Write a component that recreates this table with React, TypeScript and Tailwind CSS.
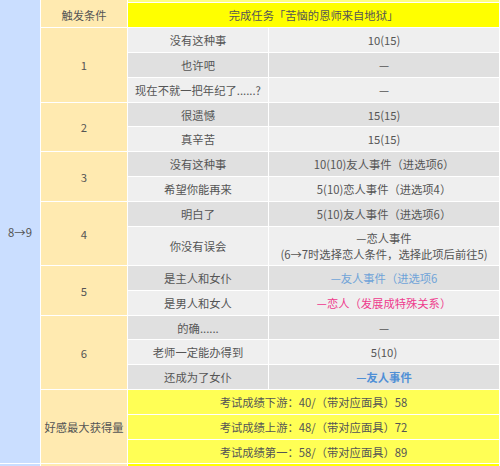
import React from "react";

// Colours taken from the screenshot
const cell = "flex items-center justify-center text-center whitespace-nowrap px-1 leading-[16px]";

const rows: { left: string; right: React.ReactNode; dark: boolean; row: string }[] = [
    { left: "没有这种事", right: "10(15)", dark: false, row: "row-start-3" },
    { left: "也许吧", right: "—", dark: true, row: "row-start-4" },
    { left: "现在不就一把年纪了......?", right: "—", dark: false, row: "row-start-5" },
    { left: "很遗憾", right: "15(15)", dark: true, row: "row-start-6" },
    { left: "真辛苦", right: "15(15)", dark: false, row: "row-start-7" },
    { left: "没有这种事", right: "10(10)友人事件（进选项6）", dark: true, row: "row-start-8" },
    { left: "希望你能再来", right: "5(10)恋人事件（进选项4）", dark: false, row: "row-start-9" },
    { left: "明白了", right: "5(10)友人事件（进选项6）", dark: true, row: "row-start-10" },
    {
        left: "你没有误会",
        right: (
            <span>
                —恋人事件
                <br />
                (6→7时选择恋人条件，选择此项后前往5)
            </span>
        ),
        dark: false,
        row: "row-start-11",
    },
    { left: "是主人和女仆", right: <span className="text-[#6fa3d8]">—友人事件（进选项6</span>, dark: true, row: "row-start-12" },
    { left: "是男人和女人", right: <span className="text-[#ee3a8c]">—恋人（发展成特殊关系）</span>, dark: false, row: "row-start-13" },
    { left: "的确......", right: "—", dark: true, row: "row-start-14" },
    { left: "老师一定能办得到", right: "5(10)", dark: false, row: "row-start-15" },
    { left: "还成为了女仆", right: <span className="font-bold text-[#4f8fd6]">—友人事件</span>, dark: true, row: "row-start-16" },
];

function App() {
    return (
        <div
            className="w-[500px] h-[466px] overflow-hidden bg-white text-[11.3px] text-[#555]"
            style={{ fontFamily: '"Noto Sans CJK SC", "Noto Sans", sans-serif' }}
        >
            <div className="grid grid-cols-[40px_86px_140px_230px] grid-rows-[2px_24px_24px_24px_24px_23px_24px_24px_24px_24px_38px_24px_24px_23px_24px_24px_24px_24px_23px_20px] gap-px pr-px bg-white">
                {/* 左列 */}
                <div className={`${cell} col-start-1 row-start-1 row-end-20 bg-[#cadeff]`}>8→9</div>
                <div className="col-start-1 row-start-20 bg-[#cadeff]" />

                {/* 触发条件 */}
                <div className={`${cell} col-start-2 row-start-1 row-end-3 bg-[#ffeab0] pt-[2px]`}>触发条件</div>
                <div className={`${cell} col-start-2 row-start-3 row-end-6 bg-[#ffeab0]`}>1</div>
                <div className={`${cell} col-start-2 row-start-6 row-end-8 bg-[#ffeab0]`}>2</div>
                <div className={`${cell} col-start-2 row-start-8 row-end-10 bg-[#ffeab0]`}>3</div>
                <div className={`${cell} col-start-2 row-start-10 row-end-12 bg-[#ffeab0]`}>4</div>
                <div className={`${cell} col-start-2 row-start-12 row-end-14 bg-[#ffeab0]`}>5</div>
                <div className={`${cell} col-start-2 row-start-14 row-end-17 bg-[#ffeab0]`}>6</div>
                <div className={`${cell} col-start-2 row-start-17 row-end-20 bg-[#ffeab0]`}>好感最大获得量</div>
                <div className="col-start-2 row-start-20 bg-[#ffeab0]" />

                {/* 任务 */}
                <div className="col-start-3 col-span-2 row-start-1 bg-[#ffff80]" />
                <div className={`${cell} col-start-3 col-span-2 row-start-2 bg-[#ffff00]`}>完成任务「苦恼的恩师来自地狱」</div>

                {rows.map((ROW, idx) => (
                    <React.Fragment key={idx}>
                        <div className={`${cell} col-start-3 ${ROW.row} ${ROW.dark ? "bg-[#e0e0e0]" : "bg-[#efefef]"}`}>{ROW.left}</div>
                        <div className={`${cell} col-start-4 ${ROW.row} ${ROW.dark ? "bg-[#e0e0e0]" : "bg-[#efefef]"}`}>{ROW.right}</div>
                    </React.Fragment>
                ))}

                <div className={`${cell} col-start-3 col-span-2 row-start-17 bg-[#ffff55]`}>考试成绩下游：40/（带对应面具）58</div>
                <div className={`${cell} col-start-3 col-span-2 row-start-18 bg-[#ffff55]`}>考试成绩上游：48/（带对应面具）72</div>
                <div className={`${cell} col-start-3 col-span-2 row-start-19 bg-[#ffff55]`}>考试成绩第一：58/（带对应面具）89</div>
                <div className="col-start-3 col-span-2 row-start-20 bg-[#ffff00]" />
            </div>
        </div>
    );
}

export default App;
